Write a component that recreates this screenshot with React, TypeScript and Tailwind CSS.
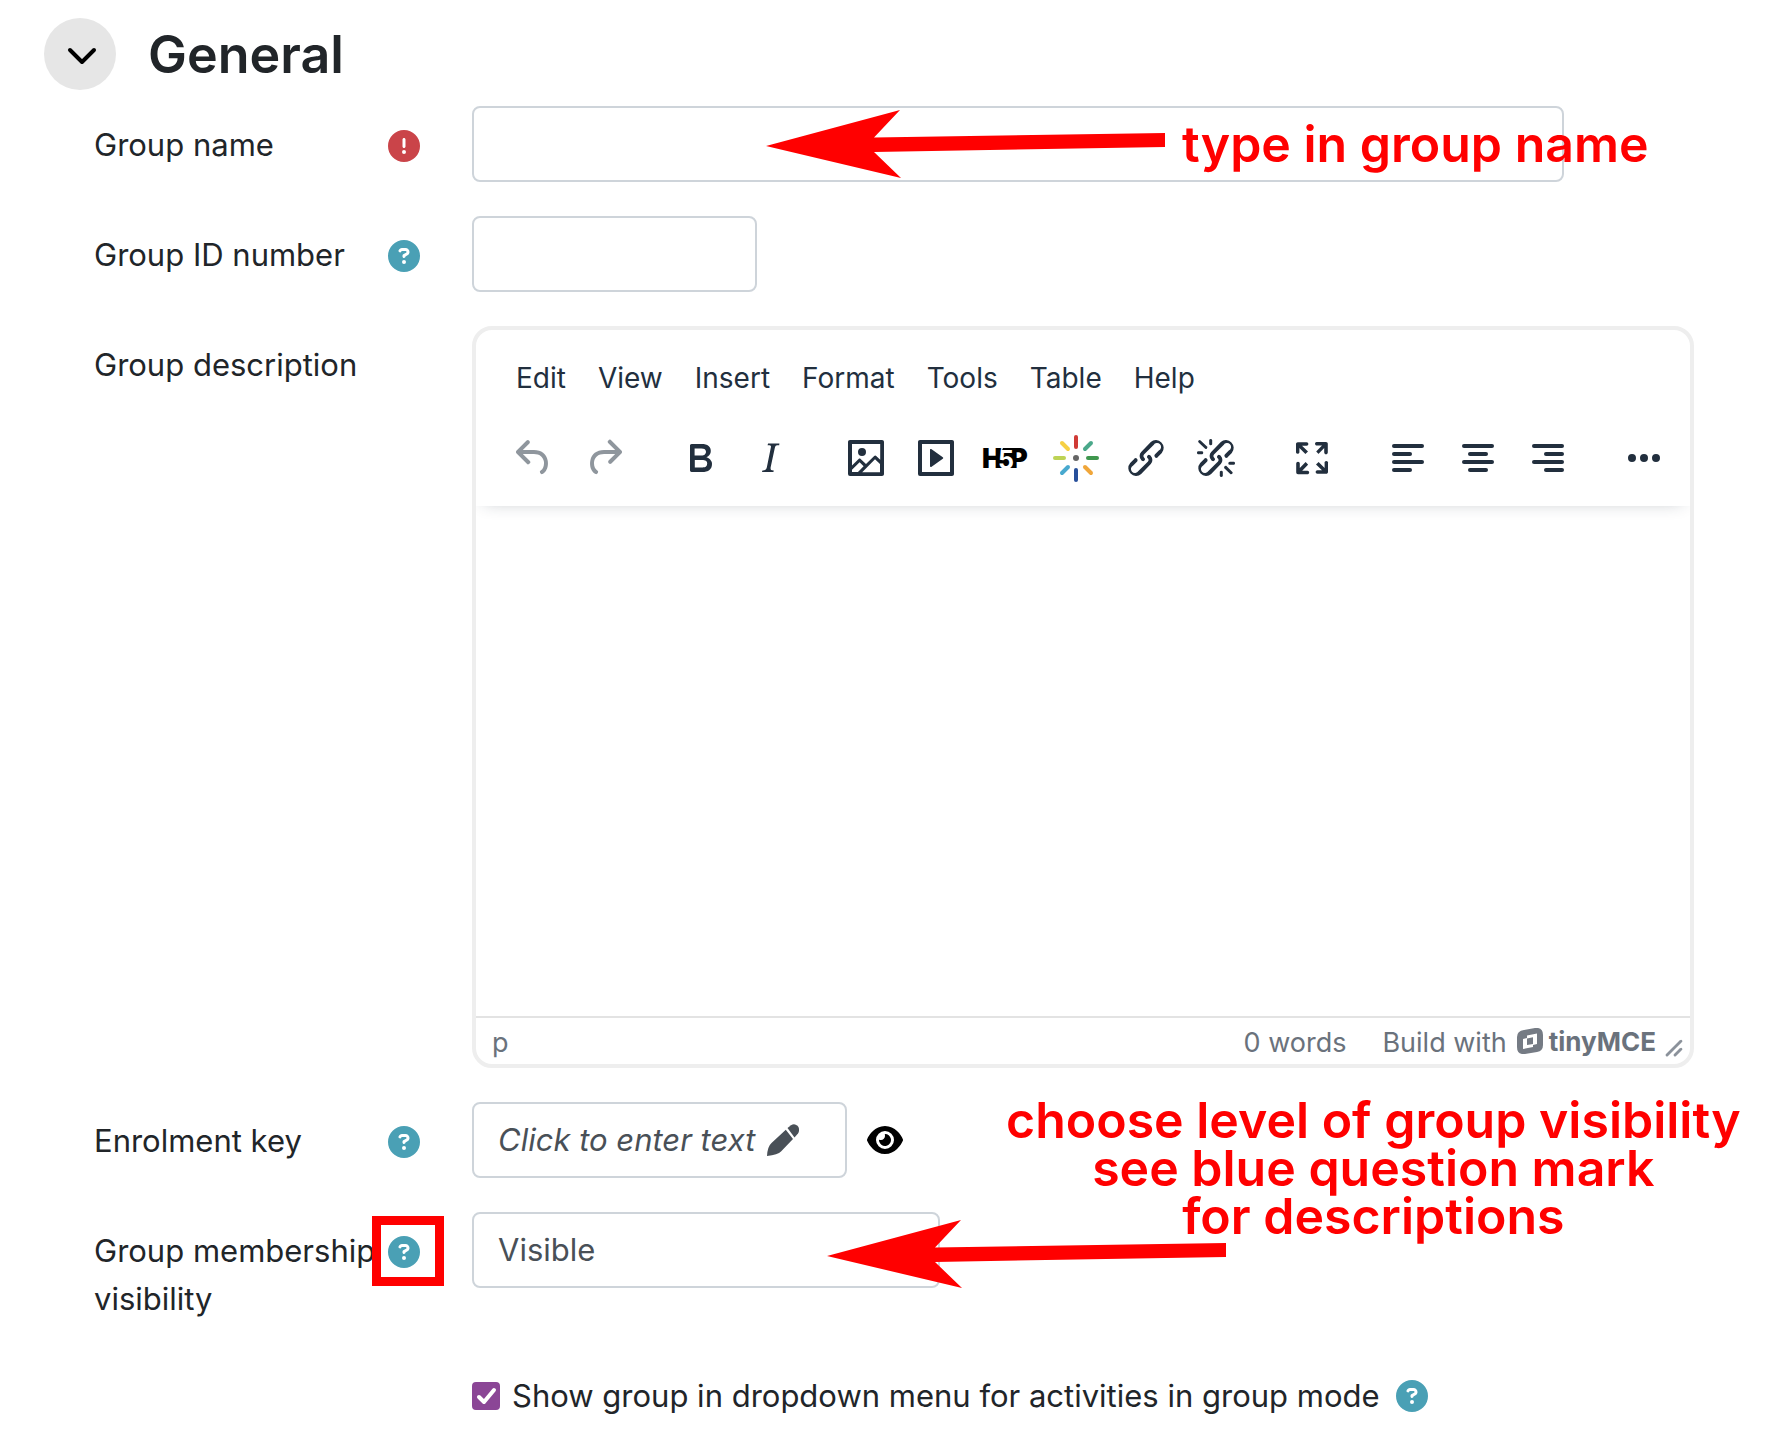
import React, { useState } from "react";
import { FaCircleExclamation, FaCircleQuestion, FaEye } from "react-icons/fa6";

interface FormRowProps {
  label: string;
  htmlFor: string;
  icon?: React.ReactNode;
  children: React.ReactNode;
}

interface ToolbarItem {
  label: string;
  icon: React.ReactNode;
  disabled?: boolean;
}

const MENU_ITEMS = ["Edit", "View", "Insert", "Format", "Tools", "Table", "Help"];

const LINK_PATH =
  "M6.2 12.3a1 1 0 0 1 1.4 1.4l-2 2a2 2 0 1 0 2.6 2.8l4.8-4.8a1 1 0 0 0 0-1.4 1 1 0 1 1 1.4-1.3 2.9 2.9 0 0 1 0 4L9.6 20a3.9 3.9 0 0 1-5.5-5.5l2-2Zm11.6-.6a1 1 0 0 1-1.4-1.4l2-2a2 2 0 1 0-2.6-2.8L11 10.3a1 1 0 0 0 0 1.4A1 1 0 1 1 9.6 13a2.9 2.9 0 0 1 0-4L14.4 4a3.9 3.9 0 0 1 5.5 5.5l-2 2Z";

const Glyph: React.FC<{ d: string }> = ({ d }) => (
  <svg viewBox="0 0 24 24" className="size-12" fill="currentColor" fillRule="evenodd" aria-hidden="true">
    <path d={d} />
  </svg>
);

const AlignGlyph: React.FC<{ shortX: number }> = ({ shortX }) => (
  <svg viewBox="0 0 24 24" className="size-12" fill="currentColor" aria-hidden="true">
    <rect x="4" y="5" width="16" height="2" rx="1" />
    <rect x={shortX} y="9" width="10" height="2" rx="1" />
    <rect x="4" y="13" width="16" height="2" rx="1" />
    <rect x={shortX} y="17" width="10" height="2" rx="1" />
  </svg>
);

const H5PGlyph: React.FC = () => (
  <svg viewBox="0 0 48 48" className="size-12 font-black" fontSize="27" aria-hidden="true">
    <text x="0" y="34">H</text>
    <text x="28" y="34">P</text>
    <path d="M21 14h9v20H16v-9Z" />
    <text x="16" y="35" fontSize="25" fontWeight="700" fill="#fff">5</text>
  </svg>
);

const SparkGlyph: React.FC = () => (
  <svg viewBox="0 0 48 48" className="size-12" fill="none" strokeWidth="4" strokeLinecap="round" aria-hidden="true">
    <path d="M24 3v10" stroke="#d03a36" />
    <path d="m39 9-6 6" stroke="#4aa88a" />
    <path d="M36 24h9" stroke="#3f974e" />
    <path d="m33 33 6 6" stroke="#f0a63a" />
    <path d="M24 36v10" stroke="#27509b" />
    <path d="m16 33-6 6" stroke="#48a9cf" />
    <path d="M3 24h9" stroke="#bdd355" />
    <path d="m10 9 6 6" stroke="#f6d044" />
    <circle cx="24" cy="24" r="3" fill="#666" stroke="none" />
  </svg>
);

const TOOLBAR_GROUPS: ToolbarItem[][] = [
  [
    {
      label: "Undo",
      disabled: true,
      icon: (
        <Glyph d="M6.4 8H12c3.7 0 6.2 2 6.8 5.1.6 2.7-.4 5.6-2.3 6.8a1 1 0 0 1-1-1.8c1.1-.6 1.8-2.7 1.4-4.6-.5-2.1-2.1-3.5-4.9-3.5H6.4l3.3 3.3a1 1 0 1 1-1.4 1.4l-5-5a1 1 0 0 1 0-1.4l5-5a1 1 0 0 1 1.4 1.4L6.4 8Z" />
      ),
    },
    {
      label: "Redo",
      disabled: true,
      icon: (
        <Glyph d="M17.6 10H12c-2.8 0-4.4 1.4-4.9 3.5-.4 2 .3 4 1.4 4.6a1 1 0 1 1-1 1.8c-2-1.2-2.9-4.1-2.3-6.8.6-3 3-5.1 6.8-5.1h5.6l-3.3-3.3a1 1 0 1 1 1.4-1.4l5 5a1 1 0 0 1 0 1.4l-5 5a1 1 0 0 1-1.4-1.4l3.3-3.3Z" />
      ),
    },
  ],
  [
    {
      label: "Bold",
      icon: (
        <Glyph d="M7.8 19c-.3 0-.5 0-.6-.2l-.2-.5V5.7c0-.2 0-.4.2-.5l.6-.2h5c1.5 0 2.7.3 3.5 1 .7.6 1.1 1.4 1.1 2.5a3 3 0 0 1-.6 1.9c-.4.6-1 1-1.6 1.2.4.1.9.3 1.3.6s.8.7 1 1.2c.4.4.5 1 .5 1.6 0 1.3-.4 2.3-1.3 3-.8.7-2.1 1-3.8 1H7.8Zm5-8.3c.6 0 1.2-.1 1.6-.5.4-.3.6-.7.6-1.3 0-1.1-.8-1.7-2.3-1.7H9.3v3.5h3.4Zm.5 6c.7 0 1.3-.1 1.7-.4.4-.4.6-.9.6-1.5s-.2-1-.7-1.4c-.4-.3-1-.4-2-.4H9.4v3.8h4Z" />
      ),
    },
    {
      label: "Italic",
      icon: (
        <Glyph d="m16.7 4.7-.1.9h-.3c-.6 0-1 0-1.4.3-.3.3-.4.6-.5 1.1l-2.1 9.8v.6c0 .5.4.8 1.4.8h.2l-.2.8H8l.2-.8h.2c1.1 0 1.8-.5 2-1.5l2-9.8.1-.5c0-.6-.4-.8-1.4-.8h-.3l.2-.9h5.8Z" />
      ),
    },
  ],
  [
    {
      label: "Image",
      icon: (
        <Glyph d="m5 15.7 3.3-3.2c.3-.3.7-.3 1 0L12 15l4.1-4c.3-.4.8-.4 1 0l2 1.9V5H5v10.7ZM5 18V19h3l2.8-2.9-2-2L5 17.9Zm14-3-2.5-2.4-6.4 6.5H19v-4ZM4 3h16c.6 0 1 .4 1 1v16c0 .6-.4 1-1 1H4a1 1 0 0 1-1-1V4c0-.6.4-1 1-1Zm6 8a2 2 0 1 0 0-4 2 2 0 0 0 0 4Z" />
      ),
    },
    {
      label: "Multimedia",
      icon: (
        <Glyph d="M4 3h16c.6 0 1 .4 1 1v16c0 .6-.4 1-1 1H4a1 1 0 0 1-1-1V4c0-.6.4-1 1-1Zm1 2v14h14V5H5Zm4.8 2.6 5.6 4a.5.5 0 0 1 0 .8l-5.6 4A.5.5 0 0 1 9 16V8a.5.5 0 0 1 .8-.4Z" />
      ),
    },
    { label: "Configure H5P content", icon: <H5PGlyph /> },
    { label: "Embed media", icon: <SparkGlyph /> },
    { label: "Link", icon: <Glyph d={LINK_PATH} /> },
    {
      label: "Unlink",
      icon: (
        <Glyph
          d={`${LINK_PATH}M7.6 6.3a.8.8 0 0 1-1 1.1L3.3 4.2a.7.7 0 1 1 1-1l3.2 3.1ZM5.1 8.6a.8.8 0 0 1 0 1.5H3a.8.8 0 0 1 0-1.5H5Zm5-3.5a.8.8 0 0 1-1.5 0V3a.8.8 0 0 1 1.5 0V5Zm6 11.8a.8.8 0 0 1 1-1l3.2 3.2a.8.8 0 0 1-1 1L16 17Zm-2.2 2a.8.8 0 0 1 1.5 0V21a.8.8 0 0 1-1.5 0V19Zm5-3.5a.7.7 0 1 1 0-1.5H21a.8.8 0 0 1 0 1.5H19Z`}
        />
      ),
    },
  ],
  [
    {
      label: "Fullscreen",
      icon: (
        <Glyph d="m15.3 10-1.2-1.3 2.9-3h-2.3a.9.9 0 1 1 0-1.7H19c.5 0 .9.4.9.9v4.4a.9.9 0 1 1-1.8 0V7l-2.9 3Zm0 4 3 3v-2.3a.9.9 0 1 1 1.7 0V19c0 .5-.4.9-.9.9h-4.4a.9.9 0 1 1 0-1.8H17l-3-2.9 1.3-1.2ZM10 15.4l-2.9 3h2.3a.9.9 0 1 1 0 1.7H5a.9.9 0 0 1-.9-.9v-4.4a.9.9 0 1 1 1.8 0V17l2.9-3 1.2 1.3ZM8.7 10 5.7 7v2.3a.9.9 0 0 1-1.7 0V5c0-.5.4-.9.9-.9h4.4a.9.9 0 0 1 0 1.8H7l3 2.9-1.3 1.2Z" />
      ),
    },
  ],
  [
    { label: "Align left", icon: <AlignGlyph shortX={4} /> },
    { label: "Align center", icon: <AlignGlyph shortX={7} /> },
    { label: "Align right", icon: <AlignGlyph shortX={10} /> },
  ],
  [
    {
      label: "Reveal or hide additional toolbar items",
      icon: <Glyph d="M6 10a2 2 0 1 0 0 4 2 2 0 0 0 0-4Zm12 0a2 2 0 1 0 0 4 2 2 0 0 0 0-4Zm-6 0a2 2 0 1 0 0 4 2 2 0 0 0 0-4Z" />,
    },
  ],
];

const HelpButton: React.FC<{ topic: string }> = ({ topic }) => (
  <button type="button" aria-label={`Help with ${topic}`} className="block size-8 text-[#4aa0b5]">
    <FaCircleQuestion className="size-8" />
  </button>
);

const FormRow: React.FC<FormRowProps> = ({ label, htmlFor, icon, children }) => (
  <div className="flex items-start">
    <div className="flex w-[378px] shrink-0 items-start justify-between pt-[15px] pr-[52px]">
      <label htmlFor={htmlFor} className="w-[290px] leading-12">
        {label}
      </label>
      <span className="flex h-[50px] items-center">{icon}</span>
    </div>
    <div className="min-w-0 flex-1">{children}</div>
  </div>
);

const Arrow: React.FC = () => (
  <svg viewBox="0 0 400 68" className="h-[68px] w-[400px] shrink-0" fill="#f00" aria-hidden="true">
    <path d="M0 36 134 0 108 27.500 399 23V37L108 42 135 68Z" />
  </svg>
);

const Editor: React.FC = () => (
  <div className="flex h-[742px] flex-col overflow-hidden rounded-[20px] border-4 border-[#eee] text-[28px] text-[#222f3e]">
    <div className="relative z-10 shadow-[0_4px_16px_-8px_rgba(34,47,62,0.3)]">
      <div role="menubar" className="flex gap-8 px-10 pt-6 leading-12">
        {MENU_ITEMS.map((item) => (
          <button key={item} type="button" role="menuitem">
            {item}
          </button>
        ))}
      </div>
      <div role="toolbar" className="flex justify-between pt-8 pr-[22px] pb-6 pl-[34px]">
        {TOOLBAR_GROUPS.map((group, index) => (
          <div key={index} className="flex gap-[22px]">
            {group.map((item) => (
              <button
                key={item.label}
                type="button"
                aria-label={item.label}
                disabled={item.disabled}
                className="disabled:opacity-50"
              >
                {item.icon}
              </button>
            ))}
          </div>
        ))}
      </div>
    </div>
    <textarea id="description" className="w-full flex-1 resize-none p-8 outline-none" />
    <div className="flex h-12 items-center border-t-2 border-[#e3e3e3] pt-1 pr-1.5 pl-4 text-[27px] text-[#6a727c]">
      <span>p</span>
      <span className="ml-auto">0 words</span>
      <a href="#tinymce" className="ml-9 flex items-center">
        Build with
        <svg viewBox="0 0 26 26" className="mb-1 ml-2.5 size-[26px]" aria-hidden="true">
          <path d="M7 2 18 0q8-1 8 7v10q0 6-6 7L8 26q-8 1-8-7V9q0-6 7-7Z" fill="#757b84" />
          <path d="M10 7.500 20 5.500V16L16 17V19L6 21V11L10 10ZM10 10.500V17L16 16V9.300Z" fill="#fff" fillRule="evenodd" />
        </svg>
        <span className="mb-1 ml-1.5 text-[26px] font-bold">tinyMCE</span>
      </a>
      <svg viewBox="0 0 10 10" className="mb-1.5 ml-2 size-5 self-end" fill="#8b929b" aria-hidden="true">
        <path d="M8.100 1.100A.5.5 0 1 1 9 2l-7 7A.5.5 0 1 1 1 8l7-7ZM8.100 5.100A.5.5 0 1 1 9 6l-3 3A.5.5 0 1 1 5 8l3-3Z" />
      </svg>
    </div>
  </div>
);

const App: React.FC = () => {
  const [showGroup, setShowGroup] = useState(true);

  return (
    <main className="bg-white pt-[18px] pr-24 pb-8 pl-11 font-['Inter','Liberation_Sans',sans-serif] text-[31px] text-[#212529]">
      <div className="flex items-center gap-8">
        <button type="button" aria-label="Collapse General" className="grid size-[72px] place-items-center rounded-full bg-[#e6e6e6] pt-1 pl-1">
          <svg viewBox="0 0 32 20" className="h-5 w-8" fill="none" stroke="#000" strokeWidth="4" strokeLinecap="round" strokeLinejoin="round" aria-hidden="true">
            <path d="m4 4 12 12L28 4" />
          </svg>
        </button>
        <h2 className="pt-0.5 text-[52px] leading-[70px] font-semibold">General</h2>
      </div>

      <form className="mt-4 flex flex-col gap-[34px] pl-[50px]">
        <FormRow label="Group name" htmlFor="name" icon={<FaCircleExclamation aria-label="Required" className="size-8 text-[#ca4449]" />}>
          <div className="relative">
            <input id="name" type="text" className="h-[76px] w-[1092px] rounded-lg border-2 border-[#ced4da] px-6" />
            <div className="pointer-events-none absolute top-1 left-[294px] flex items-center gap-4">
              <Arrow />
              <p className="text-[50px] leading-12 font-semibold whitespace-nowrap text-[#f00]">type in group name</p>
            </div>
          </div>
        </FormRow>

        <FormRow label="Group ID number" htmlFor="idnumber" icon={<HelpButton topic="Group ID number" />}>
          <input id="idnumber" type="text" className="h-[76px] w-[285px] rounded-lg border-2 border-[#ced4da] px-6" />
        </FormRow>

        <FormRow label="Group description" htmlFor="description">
          <Editor />
        </FormRow>

        <FormRow label="Enrolment key" htmlFor="enrolmentkey" icon={<HelpButton topic="Enrolment key" />}>
          <div className="flex items-center gap-5">
            <button id="enrolmentkey" type="button" className="flex h-[76px] w-[375px] items-center gap-3 rounded-lg border-2 border-[#ced4da] px-6 whitespace-nowrap text-[#495057] italic">
              Click to enter text
              <svg viewBox="0 0 32 32" className="size-8" fill="currentColor" aria-hidden="true">
                <path d="M20.500 4 24 1.200Q27.500-1 30.500 1.800 33.500 5 31 9.500L27.500 13.500Z" />
                <path d="M18.800 5.800 26 15 14 27.500Q11 30.500 0 32 .500 22.500 4.500 19Z" />
              </svg>
            </button>
            <button type="button" aria-label="Reveal">
              <FaEye className="size-9 text-black" />
            </button>
          </div>
        </FormRow>

        <FormRow
          label="Group membership visibility"
          htmlFor="visibility"
          icon={
            <span className="relative">
              <HelpButton topic="Group membership visibility" />
              <span className="pointer-events-none absolute -top-5 -right-6 -bottom-[18px] -left-4 border-[9px] border-[#f00]" />
            </span>
          }
        >
          <div className="relative">
            <select id="visibility" className="h-[76px] w-[468px] appearance-none rounded-lg border-2 border-[#ced4da] bg-white px-6 text-[#495057]">
              <option>Visible</option>
            </select>
            <div className="pointer-events-none absolute top-2 left-[355px]">
              <Arrow />
            </div>
            <p className="pointer-events-none absolute -top-[116px] left-[534px] text-center text-[50px] leading-12 font-semibold whitespace-nowrap text-[#f00]">
              choose level of group visibility
              <br />
              see blue question mark
              <br />
              for descriptions
            </p>
          </div>
        </FormRow>

        <div className="mt-4 flex items-center pl-[378px]">
          <label className="flex items-center gap-3">
            <span className="relative size-7">
              <input
                type="checkbox"
                checked={showGroup}
                onChange={() => setShowGroup(!showGroup)}
                className="peer block size-7 appearance-none rounded-sm border-2 border-[#8b4696] checked:bg-[#8b4696]"
              />
              <svg viewBox="0 0 28 28" className="pointer-events-none absolute inset-0 hidden size-7 peer-checked:block" fill="none" stroke="#fff" strokeWidth="4" strokeLinecap="round" strokeLinejoin="round" aria-hidden="true">
                <path d="m7 15 5 5L22 8" />
              </svg>
            </span>
            Show group in dropdown menu for activities in group mode
          </label>
          <span className="ml-4">
            <HelpButton topic="Show group in dropdown menu" />
          </span>
        </div>
      </form>
    </main>
  );
};

export default App;
